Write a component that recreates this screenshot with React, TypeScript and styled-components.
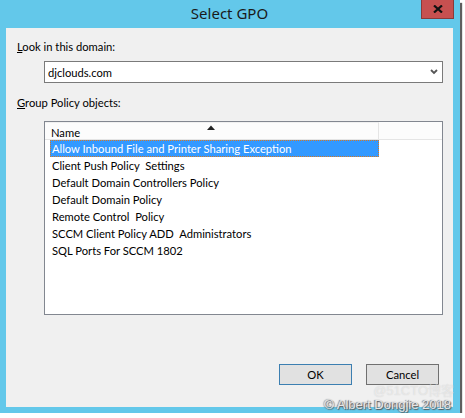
import React from "react";
import styled, { createGlobalStyle } from "styled-components";

const Global = createGlobalStyle`
  html, body { margin: 0; padding: 0; background: #ffffff; }
  body { font-family: "Lato", "Noto Sans", sans-serif; }
`;

const Window = styled.div`
  position: relative;
  width: 460px;
  height: 413px;
  background: #63c8ea;
  box-shadow: 2px 3px 1px rgba(40, 40, 40, 0.75);
  display: flex;
  flex-direction: column;
  padding: 0 7px 6px 6px;
  box-sizing: border-box;
`;

const TitleBar = styled.div`
  position: relative;
  height: 28px;
  display: flex;
  align-items: center;
  justify-content: center;
  font-family: "Noto Sans", sans-serif;
  font-size: 15px;
  color: #1a1a1a;
  padding-bottom: 2px;
  box-sizing: border-box;
`;

const CloseButton = styled.div`
  position: absolute;
  top: 0;
  right: -1px;
  width: 33px;
  height: 19px;
  background: #c75050;
  border: 1px solid #8a3a3a;
  border-top: none;
  box-sizing: border-box;
  display: flex;
  align-items: center;
  justify-content: center;
`;

const Client = styled.div`
  flex: 1;
  background: #f0f0f0;
  display: flex;
  flex-direction: column;
  padding: 11px 10px 0 11px;
  font-family: "Lato", "Noto Sans", sans-serif;
  font-size: 11.2px;
  color: #000;
`;

const Label = styled.div<{ gap: number }>`
  height: 16px;
  line-height: 16px;
  margin-bottom: ${(p) => p.gap}px;
  u { text-decoration: underline; }
`;

const Indent = styled.div`
  margin-left: 27px;
`;

const Combo = styled.div`
  height: 22px;
  border: 1px solid #7a7a7a;
  background: #fff;
  box-sizing: border-box;
  display: flex;
  align-items: center;
  justify-content: space-between;
  padding: 0 4px 0 3px;
  margin-bottom: 12px;
`;

const ListBox = styled.div`
  height: 194px;
  border: 1px solid #828790;
  background: #fff;
  box-sizing: border-box;
  display: flex;
  flex-direction: column;
`;

const HeaderRow = styled.div`
  height: 18px;
  border-bottom: 1px solid #e5e5e5;
  background: #fcfcfc;
  box-sizing: border-box;
  display: flex;
`;

const HeaderCell = styled.div`
  position: relative;
  width: 334px;
  border-right: 1px solid #e5e5e5;
  border-top: 1px solid #f0f0f0;
  box-sizing: border-box;
  padding: 2px 0 0 6px;
  line-height: 15px;
`;

const SortArrow = styled.svg`
  position: absolute;
  left: 162px;
  top: 2px;
`;

const Rows = styled.div`
  padding-left: 5px;
  display: flex;
  flex-direction: column;
`;

const Row = styled.div<{ selected?: boolean }>`
  width: 329px;
  height: 17px;
  line-height: 15px;
  padding-left: 1px;
  box-sizing: border-box;
  white-space: pre;
  background: ${(p) => (p.selected ? "#3399ff" : "transparent")};
  color: ${(p) => (p.selected ? "#ffffff" : "#000000")};
  border: 1px ${(p) => (p.selected ? "dotted #d9781f" : "solid transparent")};
`;

const ButtonBar = styled.div`
  display: flex;
  justify-content: flex-end;
  gap: 14px;
  margin-top: 49px;
  padding-right: 4px;
`;

const Button = styled.div<{ primary?: boolean }>`
  width: 73px;
  height: 21px;
  box-sizing: border-box;
  background: #e1e1e1;
  border: 1px solid ${(p) => (p.primary ? "#3c7fb1" : "#707070")};
  display: flex;
  align-items: center;
  justify-content: center;
`;

const WatermarkCN = styled.div`
  position: absolute;
  right: 6px;
  bottom: 16px;
  font-family: "Liberation Sans", "Noto Sans CJK SC", sans-serif;
  font-size: 13px;
  line-height: 12px;
  color: rgba(255, 255, 255, 0.45);
  text-shadow: 0 0 1px rgba(150, 150, 150, 0.4);
`;

const WatermarkEN = styled.div`
  position: absolute;
  right: 9px;
  bottom: 1px;
  font-family: "Liberation Sans", sans-serif;
  font-size: 13px;
  line-height: 14px;
  color: #e6e6e6;
  text-shadow: 1px 1px 1px #555, -1px 0 1px #777;
  white-space: nowrap;
`;

const items = [
  "Allow Inbound File and Printer Sharing Exception",
  "Client Push Policy  Settings",
  "Default Domain Controllers Policy",
  "Default Domain Policy",
  "Remote Control  Policy",
  "SCCM Client Policy ADD  Administrators",
  "SQL Ports For SCCM 1802",
];

export default function App() {
  return (
    <>
      <Global />
      <Window>
        <TitleBar>
          Select GPO
          <CloseButton>
            <svg width="10" height="8" viewBox="0 0 10 8">
              <path d="M1 0.5 L9 7.5 M9 0.5 L1 7.5" stroke="#111" strokeWidth="2.2" />
            </svg>
          </CloseButton>
        </TitleBar>
        <Client>
          <Label gap={6}>
            <u>L</u>ook in this domain:
          </Label>
          <Indent>
            <Combo>
              <span>djclouds.com</span>
              <svg width="8" height="6" viewBox="0 0 8 6">
                <path d="M1 1 L4 4 L7 1" stroke="#555" strokeWidth="1.8" fill="none" />
              </svg>
            </Combo>
          </Indent>
          <Label gap={10}>
            <u>G</u>roup Policy objects:
          </Label>
          <Indent>
            <ListBox>
              <HeaderRow>
                <HeaderCell>
                  Name
                  <SortArrow width="8" height="5" viewBox="0 0 8 5">
                    <path d="M0 5 L4 0.5 L8 5 Z" fill="#222" />
                  </SortArrow>
                </HeaderCell>
              </HeaderRow>
              <Rows>
                {items.map((t, i) => (
                  <Row key={t} selected={i === 0}>
                    {t}
                  </Row>
                ))}
              </Rows>
            </ListBox>
          </Indent>
          <ButtonBar>
            <Button primary>OK</Button>
            <Button>Cancel</Button>
          </ButtonBar>
        </Client>
        <WatermarkCN>@51CTO博客</WatermarkCN>
        <WatermarkEN>© Albert Dongjie 2018</WatermarkEN>
      </Window>
    </>
  );
}
